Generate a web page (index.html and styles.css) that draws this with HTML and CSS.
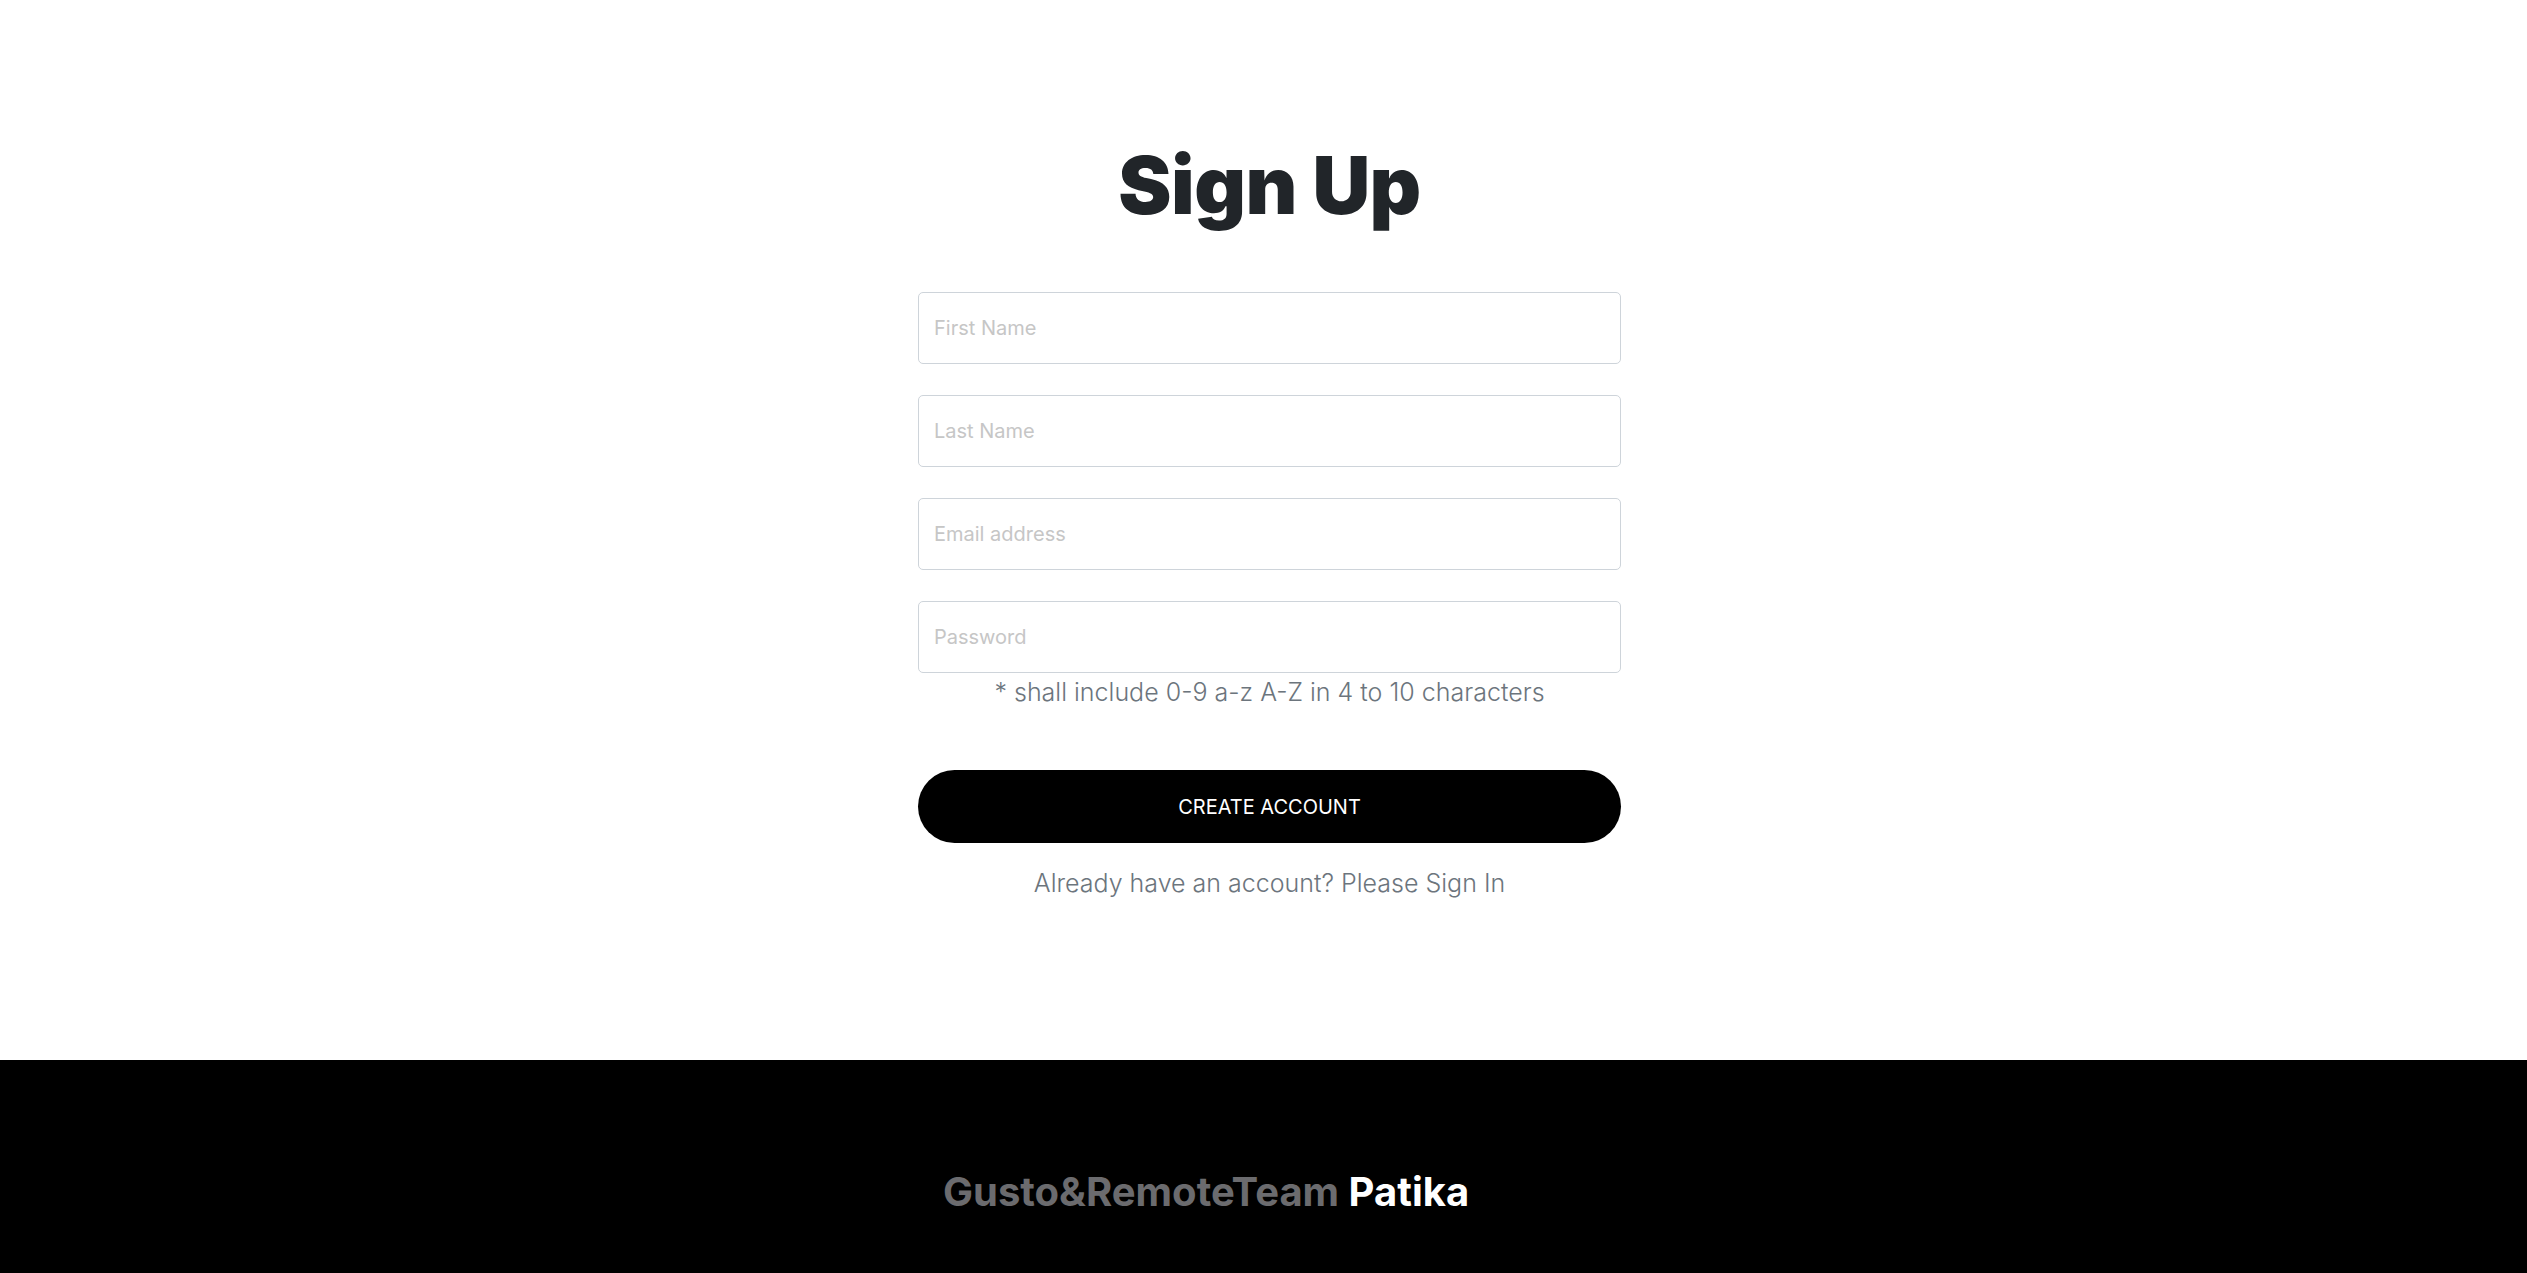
FILE: index.html
```html
<!DOCTYPE html>
<html lang="en">
<head>
<meta charset="utf-8">
<title>Sign Up</title>
<link rel="stylesheet" href="styles.css">
</head>
<body>
<main class="main">
  <h1 class="title">Sign Up</h1>
  <form class="form">
    <input class="field" type="text" placeholder="First Name">
    <input class="field" type="text" placeholder="Last Name">
    <input class="field" type="email" placeholder="Email address">
    <input class="field field-last" type="password" placeholder="Password">
    <p class="hint">* shall include 0-9 a-z A-Z in 4 to 10 characters</p>
    <button class="btn" type="button">CREATE ACCOUNT</button>
    <p class="signin">Already have an account? Please Sign In</p>
  </form>
</main>
<footer class="footer">
  <div class="footer-inner">
    <span class="brand-gray">Gusto&amp;RemoteTeam</span>&nbsp;<span class="brand-white">Patika</span>
  </div>
</footer>
</body>
</html>
```

FILE: styles.css
```css
* { box-sizing: border-box; }
html, body { margin: 0; padding: 0; }
body {
  font-family: Inter, "Noto Sans", "Liberation Sans", sans-serif;
  background: #ffffff;
  color: #212529;
}
.main {
  height: 1060px;
  padding-top: 137px;
  padding-left: 12px;
  display: flex;
  flex-direction: column;
  align-items: center;
}
.title {
  margin: 0;
  font-size: 80px;
  line-height: 96px;
  font-weight: 900;
  color: #212529;
  letter-spacing: -0.5px;
}
.form {
  width: 703px;
  margin-top: 59px;
  display: flex;
  flex-direction: column;
  align-items: stretch;
}
.field {
  height: 72px;
  margin: 0 0 31px 0;
  padding: 0 15px;
  border: 1px solid #ced4da;
  border-radius: 5px;
  font-family: inherit;
  font-size: 20px;
  color: #212529;
  background: #fff;
  outline: none;
}
.field::placeholder { color: #c6c6c6; }
.field-last { margin-bottom: 0; }
.hint {
  margin: 0;
  text-align: center;
  font-size: 25px;
  line-height: 38px;
  font-weight: 300;
  color: #6c757d;
}
.btn {
  margin-top: 59px;
  height: 73px;
  border: none;
  border-radius: 40px;
  background: #000;
  color: #fff;
  font-family: inherit;
  font-size: 20px;
  font-weight: 400;
  cursor: pointer;
}
.signin {
  margin: 22px 0 0 0;
  text-align: center;
  font-size: 25px;
  line-height: 36px;
  font-weight: 300;
  color: #6c757d;
}
.footer {
  height: 213px;
  background: #000;
  display: flex;
  justify-content: center;
  padding-left: 12px;
}
.footer-inner {
  width: 703px;
  padding-left: 25px;
  padding-top: 110px;
  font-size: 40px;
  line-height: 44px;
  font-weight: 700;
}
.brand-gray { color: #6b6b6e; }
.brand-white { color: #ffffff; }
```
